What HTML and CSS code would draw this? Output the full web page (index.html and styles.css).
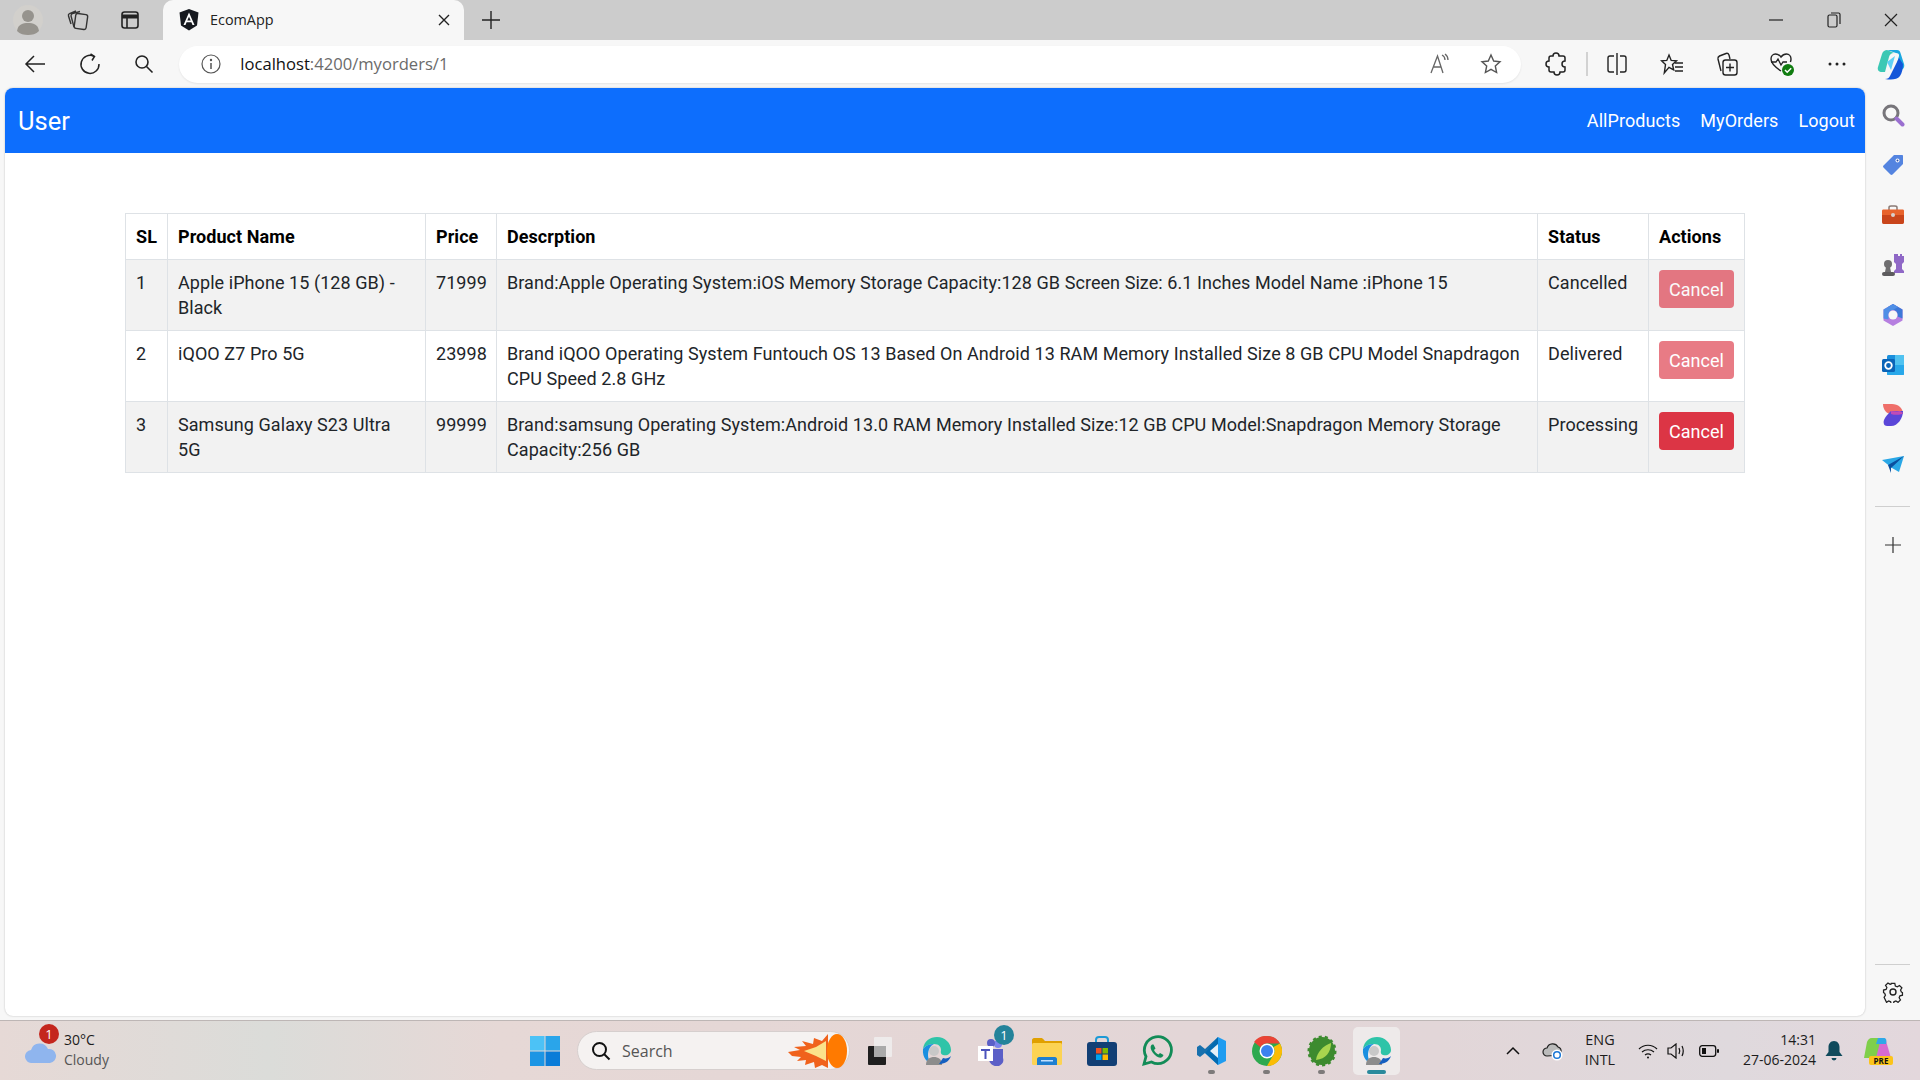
FILE: index.html
```html
<!DOCTYPE html>
<html lang="en">
<head>
    <meta charset="UTF-8">
    <title>EcomApp</title>
    <link rel="stylesheet" href="styles.css">
</head>
<body>
    <div class="tabstrip">
        <div class="strip-btn first">
            <svg width="32" height="32" viewBox="0 0 32 32"><circle cx="16" cy="16" r="15" fill="#d2d0cc"/><circle cx="16" cy="12" r="6" fill="#96938d"/><path d="M5 27c1-7 6-8 11-8s10 1 11 8c-3 3-7 4-11 4s-8-1-11-4z" fill="#96938d"/></svg>
        </div>
        <div class="strip-btn second">
            <svg width="24" height="24" viewBox="0 0 24 24" fill="none" stroke="#333" stroke-width="1.4"><rect x="9" y="6" width="12" height="15" rx="2" transform="rotate(8 15 13)"/><path d="M8 19 5 8c0-1 .5-2 1.500-2.300L14 3.500M5 16 2.500 8c-.3-1 .2-2 1-2.300L10 3"/></svg>
        </div>
        <div class="strip-btn third">
            <svg width="22" height="22" viewBox="0 0 22 22" fill="none" stroke="#222" stroke-width="1.6"><rect x="3" y="3" width="16" height="16" rx="2.500"/><path d="M3 7.500h16" stroke-width="4"/><path d="M8 8v11"/></svg>
        </div>
        <div class="tab">
            <svg class="favicon" width="20" height="22" viewBox="0 0 20 22"><path d="M10 0 19.500 3.400 18 16.500 10 21.500 2 16.500.5 3.400z" fill="#16191f"/><path d="M10 3.500 4.500 16h2l1.100-2.800h4.800l1.100 2.800h2zm0 4.300 1.700 3.700H8.300z" fill="#fff"/></svg>
            <span class="tab-title">EcomApp</span>
            <svg width="12" height="12" viewBox="0 0 12 12" stroke="#222" stroke-width="1.400"><path d="M1 1l10 10M11 1 1 11"/></svg>
        </div>
        <div class="strip-btn plus">
            <svg width="20" height="20" viewBox="0 0 20 20" stroke="#222" stroke-width="1.400"><path d="M10 1v18M1 10h18"/></svg>
        </div>
        <div class="window-btns">
            <svg width="14" height="14" viewBox="0 0 14 14" stroke="#222" stroke-width="1.200"><path d="M0 7h14"/></svg>
            <svg width="14" height="16" viewBox="0 0 14 16" fill="none" stroke="#222" stroke-width="1.200"><rect x="1" y="3" width="9" height="12" rx="1.500"/><path d="M4 1h7.500c1 0 1.500.5 1.500 1.500V12"/></svg>
            <svg width="14" height="14" viewBox="0 0 14 14" stroke="#222" stroke-width="1.200"><path d="M1 1l12 12M13 1 1 13"/></svg>
        </div>
    </div>

    <div class="toolbar">
        <div class="tool-btn">
            <svg width="22" height="20" viewBox="0 0 22 20" fill="none" stroke="#222" stroke-width="1.500"><path d="M21 10H2M10 2l-8 8 8 8"/></svg>
        </div>
        <div class="tool-btn">
            <svg width="22" height="22" viewBox="0 0 22 22" fill="none" stroke="#222" stroke-width="1.500"><path d="M15 3.300A9 9 0 1 0 20 11"/><path d="M11.500 1 15.500 3.500 13 7.500"/></svg>
        </div>
        <div class="tool-btn">
            <svg width="20" height="20" viewBox="0 0 20 20" fill="none" stroke="#222" stroke-width="1.600"><circle cx="8" cy="8" r="6"/><path d="M12.500 12.500 18.500 18.500"/></svg>
        </div>
        <div class="addressbar">
            <svg class="info" width="20" height="20" viewBox="0 0 20 20" fill="none" stroke="#555" stroke-width="1.200"><circle cx="10" cy="10" r="9"/><path d="M10 9v6" stroke-width="1.500"/><circle cx="10" cy="6" r=".6"/></svg>
            <span class="url">localhost<span class="url-rest">:4200/myorders/1</span></span>
            <svg class="read" width="24" height="22" viewBox="0 0 24 22" fill="none" stroke="#666" stroke-width="1.300"><path d="M3 20 9.500 3 15 20M5.500 14h8"/><path d="M14 2c2 1 3 3 3 5M17 1c2 1.500 3 3.500 3 6"/></svg>
            <svg class="star" width="22" height="22" viewBox="0 0 22 22" fill="none" stroke="#555" stroke-width="1.400"><path d="M11 2l2.700 6 6.300.7-4.700 4.300 1.300 6.500L11 16.300 5.400 19.500 6.700 13 2 8.700 8.300 8z"/></svg>
        </div>
        <div class="toolbar-right">
            <div class="tool-cell">
                <svg width="22" height="24" viewBox="0 0 22 24" fill="none" stroke="#222" stroke-width="1.500"><path d="M8 4a3 3 0 0 1 6 0h4c1 0 2 1 2 2v3a3 3 0 0 0 0 6v3c0 1-1 2-2 2h-3a3 3 0 0 1-6 0H6c-1 0-2-1-2-2v-3a3 3 0 0 1 0-6V6c0-1 1-2 2-2z"/></svg>
            </div>
            <span class="tool-divider"></span>
            <div class="tool-cell">
                <svg width="22" height="24" viewBox="0 0 22 24" fill="none" stroke="#222" stroke-width="1.400"><path d="M8 4H4a2 2 0 0 0-2 2v12a2 2 0 0 0 2 2h4M14 4h4a2 2 0 0 1 2 2v12a2 2 0 0 1-2 2h-4M11 1v22"/></svg>
            </div>
            <div class="tool-cell">
                <svg width="24" height="24" viewBox="0 0 24 24" fill="none" stroke="#222" stroke-width="1.400"><path d="M9 3l2.200 5.400 5.300.4-4 3.700 1.200 5.300L9 15.300 4.300 21 5.500 12.500 1.500 8.800l5.300-.4z"/><path d="M15 11h8M15 15h8M15 19h8"/></svg>
            </div>
            <div class="tool-cell">
                <svg width="24" height="26" viewBox="0 0 24 26" fill="none" stroke="#222" stroke-width="1.400"><path d="M6 20 3 8c-.3-1.500.5-2.500 1.500-3L11 2.500c1.500-.5 2.500.3 3 1.500l1 4"/><rect x="8" y="9" width="14" height="15" rx="2.500"/><path d="M15 12.500v8M11 16.500h8"/></svg>
            </div>
            <div class="tool-cell">
                <svg width="28" height="28" viewBox="0 0 28 28"><path d="M13 21C7 17 3 13 3 9c0-3 2-5 4.500-5 2 0 4 1 5.500 3 1.500-2 3.500-3 5.500-3C21 4 23 6 23 9c0 1-.2 2-.6 3" fill="none" stroke="#222" stroke-width="1.400"/><path d="M3 12h5l2-3 3 6 2-3h4" fill="none" stroke="#222" stroke-width="1.300"/><circle cx="20" cy="20" r="6" fill="#107c10"/><path d="M17 20l2.200 2.200 4-4" fill="none" stroke="#fff" stroke-width="1.500"/></svg>
            </div>
            <div class="tool-cell">
                <svg width="18" height="4" viewBox="0 0 18 4" fill="#222"><circle cx="2" cy="2" r="1.500"/><circle cx="9" cy="2" r="1.500"/><circle cx="16" cy="2" r="1.500"/></svg>
            </div>
            <div class="tool-cell">
                <svg width="30" height="32" viewBox="0 0 30 32"><path d="M10 2h10c2 0 3 1 3.500 3L27 16c1 3-1 6-4 6h-5l4-14c.5-2-1-3-3-3z" fill="#1aa7e0"/><path d="M10 2c-2 0-4 1-5 4L1 19c-1 3 1 5 4 5h3L12 9c.5-2 2-4 5-4z" fill="#3cc8b4"/><path d="M22 10l-9 18c-1 2-2 3-5 3 6 1 12 1 15-3 2-3 3-8 3-12z" fill="#1456d9"/><path d="M10 14l8-6-4 14z" fill="#5fd0f5"/></svg>
            </div>
        </div>
    </div>

    <div class="browser-body">
        <main class="page">
            <nav class="navbar">
                <span class="brand">User</span>
                <div class="nav-links">
                    <a>AllProducts</a>
                    <a>MyOrders</a>
                    <a>Logout</a>
                </div>
            </nav>
            <div class="table-wrap">
                <table class="orders">
                    <colgroup>
                        <col class="c-sl"><col class="c-name"><col class="c-price"><col class="c-desc"><col class="c-status"><col class="c-actions">
                    </colgroup>
                    <thead>
                        <tr><th>SL</th><th>Product Name</th><th>Price</th><th>Descrption</th><th>Status</th><th>Actions</th></tr>
                    </thead>
                    <tbody>
                        <tr>
                            <td>1</td>
                            <td>Apple iPhone 15 (128 GB) - Black</td>
                            <td>71999</td>
                            <td>Brand:Apple Operating System:iOS Memory Storage Capacity:128 GB Screen Size: 6.1 Inches Model Name :iPhone 15</td>
                            <td>Cancelled</td>
                            <td><button class="btn-cancel off">Cancel</button></td>
                        </tr>
                        <tr>
                            <td>2</td>
                            <td>iQOO Z7 Pro 5G</td>
                            <td>23998</td>
                            <td>Brand iQOO Operating System Funtouch OS 13 Based On Android 13 RAM Memory Installed Size 8 GB CPU Model Snapdragon CPU Speed 2.8 GHz</td>
                            <td>Delivered</td>
                            <td><button class="btn-cancel off">Cancel</button></td>
                        </tr>
                        <tr>
                            <td>3</td>
                            <td>Samsung Galaxy S23 Ultra 5G</td>
                            <td>99999</td>
                            <td>Brand:samsung Operating System:Android 13.0 RAM Memory Installed Size:12 GB CPU Model:Snapdragon Memory Storage Capacity:256 GB</td>
                            <td>Processing</td>
                            <td><button class="btn-cancel">Cancel</button></td>
                        </tr>
                    </tbody>
                </table>
            </div>
        </main>

        <aside class="sidebar">
            <div class="side-icons">
                <div class="side-cell"><svg width="24" height="24" viewBox="0 0 24 24" fill="none"><circle cx="10" cy="10" r="7" stroke="#77757a" stroke-width="3"/><path d="M15.500 15.500 21.500 21.500" stroke="#9a6fd0" stroke-width="4" stroke-linecap="round"/></svg></div>
                <div class="side-cell"><svg width="22" height="22" viewBox="0 0 22 22"><path d="M12 1h8c.6 0 1 .4 1 1v8L10.500 20.500c-.6.6-1.500.6-2 0L1.500 13.500c-.6-.6-.6-1.500 0-2z" fill="#5484e0"/><circle cx="15.500" cy="6.500" r="2" fill="#fff"/><circle cx="15.500" cy="6.500" r="1" fill="#2c4fa8"/></svg></div>
                <div class="side-cell"><svg width="24" height="20" viewBox="0 0 24 20"><path d="M8 5V2.500C8 1.500 9 1 10 1h4c1 0 2 .5 2 1.500V5" fill="none" stroke="#8a7a75" stroke-width="1.500"/><path d="M1 6c0-1 .5-1.500 1.500-1.500h19c1 0 1.500.5 1.500 1.500v4H1z" fill="#e8632c"/><path d="M1 10h22v7c0 1-.5 2-1.500 2h-19C1.500 19 1 18 1 17z" fill="#c9451b"/><circle cx="12" cy="10" r="2" fill="#d8d0cc"/></svg></div>
                <div class="side-cell"><svg width="24" height="24" viewBox="0 0 24 24"><path d="M15 1h2v2h2V1h2v2h2v6l-2 2v5l2 2v2H13v-2l2-2v-5l-2-2V1h2z" fill="#8f68c6"/><circle cx="7" cy="11" r="4" fill="#6f6e70"/><path d="M5 14h4l1 5H4z" fill="#6f6e70"/><rect x="1" y="19" width="13" height="4" rx="2" fill="#5d5c5e"/></svg></div>
                <div class="side-cell"><svg width="22" height="24" viewBox="0 0 22 24"><path d="M11 1 20.500 6.500v11L11 23 1.500 17.500v-11z" fill="#b67fe0"/><path d="M11 1 20.500 6.500v9l-5-2V12a5 5 0 0 0-4.500-5L6 4z" fill="#3d78d8"/><path d="M11 1 1.500 6.500v9l5 1V12a5 5 0 0 1 4.500-5L16 4z" fill="#4f8fe6"/><circle cx="11" cy="12" r="4.500" fill="#f7f7f7"/></svg></div>
                <div class="side-cell"><svg width="24" height="22" viewBox="0 0 24 22"><rect x="6" y="1" width="17" height="20" rx="1.500" fill="#1a8fdc"/><path d="M6 11h17v8.500c0 1-.5 1.500-1.500 1.500h-14c-1 0-1.500-.5-1.500-1.500z" fill="#28a8ea"/><path d="M14 1h9v10h-9z" fill="#50c2f0"/><rect x="1" y="5" width="13" height="13" rx="1.500" fill="#0a64b8"/><circle cx="7.500" cy="11.500" r="3.300" fill="none" stroke="#fff" stroke-width="1.800"/></svg></div>
                <div class="side-cell"><svg width="22" height="24" viewBox="0 0 22 24"><path d="M1 1h9c6 0 11 4 11 10H9C5 11 1 7 1 1z" fill="#ef6f6a"/><path d="M9 8h12c0 7-5 15-12 15H5c-3 0-4-3-3-6s4-6 7-9z" fill="#5a46d8"/><path d="M9 8c3 0 6 1 9 0l3 2c0 1-6 3-12 1z" fill="#c04bb8"/></svg></div>
                <div class="side-cell"><svg width="24" height="18" viewBox="0 0 24 18"><path d="M1 4 23 0 18 16 11 12z" fill="#29a7e6"/><path d="M7 9 23 0 10 12 10 17z" fill="#0a4f9e"/></svg></div>
                <span class="side-line"></span>
                <div class="side-cell"><svg width="16" height="16" viewBox="0 0 16 16" stroke="#333" stroke-width="1.200"><path d="M8 0v16M0 8h16"/></svg></div>
            </div>
            <div class="side-bottom">
                <span class="side-line"></span>
                <svg width="22" height="22" viewBox="0 0 22 22" fill="none" stroke="#222" stroke-width="1.400"><circle cx="11" cy="11" r="3"/><path d="M9 1.500h4l.6 2.800 2.200.9 2.400-1.500 2.700 2.700-1.500 2.400.9 2.200 1.200.6v3l-2.800.6-.9 2.200 1.500 2.400-2.700 2.700-2.400-1.500-2.200.9-.6 2.800H9l-.6-2.800-2.200-.9-2.400 1.500L1.100 17l1.500-2.400-.9-2.200L.5 11.800v-3l2.800-.6.9-2.200L2.700 3.600 5.400 1l2.400 1.500 1-.2z" transform="translate(1.100 1.100) scale(.9)"/></svg>
            </div>
        </aside>
    </div>

    <footer class="taskbar">
        <div class="weather">
            <svg class="cloud" width="32" height="20" viewBox="0 0 32 20"><path d="M7 20a6.500 6.500 0 0 1-1-13 9 9 0 0 1 17-1 7 7 0 0 1 2 14z" fill="#8fb5ee"/></svg>
            <span class="weather-badge">1</span>
            <div class="weather-text">
                <span>30°C</span>
                <span class="cloudy">Cloudy</span>
            </div>
        </div>
        <svg class="start" width="30" height="30" viewBox="0 0 30 30"><rect width="14.500" height="14.500" fill="#4cc2f6"/><rect x="15.500" width="14.500" height="14.500" fill="#2aa5ea"/><rect y="15.500" width="14.500" height="14.500" fill="#1c95e4"/><rect x="15.500" y="15.500" width="14.500" height="14.500" fill="#0a7cd8"/></svg>
        <div class="search">
            <svg width="20" height="20" viewBox="0 0 20 20" fill="none" stroke="#111" stroke-width="2"><circle cx="8.500" cy="8.500" r="6.500"/><path d="M13 13l5.500 5.500"/></svg>
            <span>Search</span>
            <svg class="search-art" width="60" height="36" viewBox="0 0 60 36"><path d="M0 19l12-2-6-3 12-1-4-5 11 3 1-6 8 3 6-7v34l-6-3-7 3-1-6-9 3 1-5-9 1 4-4-9-1z" fill="#f0621c"/><path d="M16 18l12-4 10-6v20l-10-5z" fill="#fbe28a"/><ellipse cx="49" cy="18" rx="10" ry="17" fill="#ff7a00"/></svg>
        </div>
        <div class="apps">
            <div class="app">
                <svg width="30" height="30" viewBox="0 0 30 30"><rect x="1" y="10" width="18" height="19" rx="1" fill="#1f1f1f"/><rect x="7" y="1" width="18" height="20" rx="1" fill="#efeded" fill-opacity=".92"/><rect x="7" y="10" width="12" height="11" fill="#aaa"/></svg>
            </div>
            <div class="app">
                <svg width="32" height="30" viewBox="0 0 32 30"><path d="M2 13C3 5 9 1 16 1c8 0 14 6 14 13 0 4-4 6-8 5-3-1-2-4-2-5 0-3-2-6-7-6-5 0-9 2-11 5z" fill="#2ec4a8"/><path d="M2 13c3-4 7-5 11-5-4 2-6 6-6 11 0 4 2 8 7 10C7 28 1 22 2 13z" fill="#1a8fe0"/><circle cx="13" cy="15" r="5" fill="#c8c8c8"/><path d="M5 29c0-6 4-8 8-8s8 2 8 8z" fill="#8c8c8c"/><path d="M18 28c5 0 10-2 12-8-2 2-5 3-8 2z" fill="#155fc0"/></svg>
            </div>
            <div class="app">
                <svg width="30" height="30" viewBox="0 0 30 30"><circle cx="21" cy="8" r="4" fill="#7b83eb"/><path d="M12 13h14v9a6 6 0 0 1-6 8 7 7 0 0 1-8-7z" fill="#5b5fc7"/><circle cx="14" cy="7" r="4" fill="#5b5fc7"/><rect x="1" y="10" width="15" height="15" fill="#fff"/><path d="M4 13h9v2H9.500v8h-2v-8H4z" fill="#4b53bc"/></svg>
                <span class="app-badge">1</span>
            </div>
            <div class="app">
                <svg width="30" height="28" viewBox="0 0 30 28"><path d="M0 3c0-1 1-2 2-2h7c1 0 2 .5 3 2l1 1h17v5H0z" fill="#e0a000"/><rect y="6" width="30" height="22" rx="1.500" fill="#fcd353"/><path d="M5 28v-6c0-1 1-2 2-2h16c1 0 2 1 2 2v6z" fill="#1e7fd0"/><rect x="9" y="23" width="12" height="1.500" fill="#bfe0ff"/></svg>
            </div>
            <div class="app">
                <svg width="30" height="30" viewBox="0 0 30 30"><path d="M9 7V4c0-2 1-3 3-3h6c2 0 3 1 3 3v3" fill="none" stroke="#1d9ad6" stroke-width="2"/><rect y="6" width="30" height="24" rx="3" fill="#123f75"/><rect x="9" y="12" width="5.500" height="5.500" fill="#f25022"/><rect x="15.500" y="12" width="5.500" height="5.500" fill="#7fba00"/><rect x="9" y="18.500" width="5.500" height="5.500" fill="#00a4ef"/><rect x="15.500" y="18.500" width="5.500" height="5.500" fill="#ffb900"/></svg>
            </div>
            <div class="app">
                <svg width="32" height="32" viewBox="0 0 32 32" fill="none"><path d="M3 29l2-7.500A13.500 13.500 0 1 1 10.500 27z" stroke="#128c57" stroke-width="2.800"/><path d="M11 9.500c-1.500 1-2 3-.5 6s4.500 6 7.500 7c2 .6 4-.5 4.500-2.500l-3.500-2-1.500 1.500c-2-1-3.500-2.500-4.500-4.500l1.500-1.500-2-4z" fill="#128c57"/></svg>
            </div>
            <div class="app running">
                <svg width="30" height="30" viewBox="0 0 30 30"><path d="M21 1l8 4v20l-8 4-13-12z" fill="#1f9cf0"/><path d="M21 1 8 13l-5-4-3 2v8l3 2 5-4 13 12z" fill="#0065a9" fill-opacity=".9"/><path d="M21 8v14l-8-7z" fill="#fff" fill-opacity=".9"/></svg>
            </div>
            <div class="app running">
                <svg width="30" height="30" viewBox="0 0 30 30"><circle cx="15" cy="15" r="15" fill="#2da94f"/><path d="M15 0a15 15 0 0 1 13 7.500H15a7.500 7.500 0 0 0-6.500 3.800L2 6A15 15 0 0 1 15 0z" fill="#ea4335"/><path d="M28 7.500A15 15 0 0 1 15 30l6.500-11.300A7.500 7.500 0 0 0 21.500 11z" fill="#fbbc04"/><circle cx="15" cy="15" r="7.500" fill="#fff"/><circle cx="15" cy="15" r="6" fill="#3b82f0"/></svg>
            </div>
            <div class="app running">
                <svg width="30" height="32" viewBox="0 0 30 32"><ellipse cx="15" cy="16" rx="13" ry="14" fill="#3d8b2f" stroke="#3d8b2f" stroke-width="3" stroke-dasharray="3 3"/><path d="M24 8c0 9-5 16-15 17 1-8 7-14 15-17z" fill="#a8d64e"/></svg>
            </div>
            <div class="app active">
                <svg width="32" height="30" viewBox="0 0 32 30"><path d="M2 13C3 5 9 1 16 1c8 0 14 6 14 13 0 4-4 6-8 5-3-1-2-4-2-5 0-3-2-6-7-6-5 0-9 2-11 5z" fill="#2ec4a8"/><path d="M2 13c3-4 7-5 11-5-4 2-6 6-6 11 0 4 2 8 7 10C7 28 1 22 2 13z" fill="#1a8fe0"/><circle cx="13" cy="15" r="5" fill="#c8c8c8"/><path d="M5 29c0-6 4-8 8-8s8 2 8 8z" fill="#8c8c8c"/><path d="M18 28c5 0 10-2 12-8-2 2-5 3-8 2z" fill="#155fc0"/></svg>
            </div>
        </div>
        <div class="tray">
            <svg class="tray-chevron" width="14" height="9" viewBox="0 0 14 9" fill="none" stroke="#111" stroke-width="1.500"><path d="M1 8l6-6 6 6"/></svg>
            <svg class="tray-cloud" width="22" height="20" viewBox="0 0 22 20"><path d="M5 15a4 4 0 0 1 0-8 6 6 0 0 1 11-1 4.500 4.500 0 0 1 3 5v3z" fill="#bbb" stroke="#222" stroke-width="1.200"/><circle cx="15" cy="14" r="5.500" fill="#fff"/><circle cx="15" cy="14" r="3.300" fill="none" stroke="#1c78d6" stroke-width="1.500"/></svg>
            <div class="lang"><span>ENG</span><span>INTL</span></div>
            <svg class="tray-wifi" width="20" height="16" viewBox="0 0 20 16" fill="none" stroke="#111" stroke-width="1.200"><path d="M1 6c5-5 13-5 18 0M4 9c3.500-3 8.500-3 12 0M7 12c2-1.500 4-1.500 6 0"/><circle cx="10" cy="14.500" r="1" fill="#111" stroke="none"/></svg>
            <svg class="tray-vol" width="20" height="16" viewBox="0 0 20 16" fill="none" stroke="#111" stroke-width="1.200"><path d="M1 5h3l5-4v14l-5-4H1z"/><path d="M12 5c1 2 1 4 0 6M15 3c1.500 3 1.500 7 0 10"/></svg>
            <svg class="tray-batt" width="20" height="12" viewBox="0 0 20 12"><rect x=".7" y=".7" width="16" height="10.600" rx="2.500" fill="none" stroke="#111" stroke-width="1.300"/><rect x="3" y="3" width="4" height="6" fill="#111"/><rect x="18" y="4" width="2" height="4" rx="1" fill="#111"/></svg>
            <div class="clock"><span>14:31</span><span>27-06-2024</span></div>
            <svg class="tray-bell" width="18" height="20" viewBox="0 0 18 20" fill="#0f4a5c"><path d="M9 0c3.500 0 5.500 3 5.500 6v5l3 4H.5l3-4V6C3.500 3 5.500 0 9 0z"/><path d="M6.500 17h5a2.500 2.500 0 0 1-5 0z"/></svg>
            <div class="tray-copilot">
                <svg width="30" height="22" viewBox="0 0 28 22"><path d="M8 1h10c2 0 3 1 4 3l5 17H4z" fill="#d66bd0"/><path d="M8 1C5 1 4 3 3 5L0 21h12l4-16c.5-2 1-3 3-4z" fill="#7fcf4a"/><path d="M14 1h6c2 0 3 2 2 6H12z" fill="#2fa8e8"/></svg>
                <span class="pre">PRE</span>
            </div>
        </div>
    </footer>
</body>
</html>
```

FILE: styles.css
```css
* {
    box-sizing: border-box;
}
body {
    margin: 0;
    width: 1920px;
    height: 1080px;
    overflow: hidden;
    display: flex;
    flex-direction: column;
    background-color: #f7f7f7;
    font-family: Roboto, sans-serif;
    color: #212529;
}

/* browser chrome */
.tabstrip {
    height: 40px;
    background-color: #cccccc;
    display: flex;
    align-items: center;
}
.strip-btn {
    width: 52px;
    display: flex;
    justify-content: center;
}
.strip-btn.first {
    width: 56px;
}
.strip-btn.second {
    width: 44px;
}
.strip-btn.third {
    width: 60px;
}
.strip-btn.plus {
    margin-left: 1px;
}
.tab {
    width: 301px;
    height: 40px;
    margin-left: 3px;
    padding: 0 14px 0 16px;
    background-color: #f7f7f7;
    border-radius: 10px 10px 0 0;
    display: flex;
    align-items: center;
}
.tab-title {
    flex: 1;
    margin: -2px 0 0 11px;
    font-family: "Open Sans", sans-serif;
    font-size: 14.4px;
    color: #222;
}
.window-btns {
    margin-left: auto;
    width: 151px;
    padding-right: 22px;
    display: flex;
    justify-content: space-between;
    align-items: center;
}
.toolbar {
    height: 48px;
    background-color: #f7f7f7;
    display: flex;
    align-items: center;
    padding-left: 8px;
}
.tool-btn {
    width: 55px;
    display: flex;
    justify-content: center;
}
.addressbar {
    width: 1355px;
    height: 37px;
    margin-left: 8px;
    padding: 0 19px 0 22px;
    background-color: #fff;
    border-radius: 19px;
    box-shadow: 0 1px 2px rgba(0,0,0,0.08);
    display: flex;
    align-items: center;
}
.url {
    flex: 1;
    margin: -2px 0 0 19px;
    font-family: "Open Sans", sans-serif;
    font-size: 16.6px;
    color: #111;
}
.url-rest {
    color: #6b6b6b;
}
.read {
    margin-right: 28px;
}
.toolbar-right {
    flex: 1;
    display: flex;
    align-items: center;
    padding-left: 8px;
}
.tool-cell {
    width: 55px;
    display: flex;
    justify-content: center;
}
.tool-divider {
    width: 2px;
    height: 24px;
    margin: 0 2px;
    background-color: #d2d2d2;
}

/* page */
.browser-body {
    height: 932px;
    display: flex;
    padding-left: 5px;
}
.page {
    width: 1860px;
    height: 928px;
    background-color: #fff;
    border-radius: 8px;
    box-shadow: 0 0 2px rgba(0,0,0,0.25);
    overflow: hidden;
}
.navbar {
    height: 65px;
    padding: 0 10px 0 13px;
    background-color: #0d6efd;
    color: #fff;
    display: flex;
    align-items: center;
    justify-content: space-between;
}
.brand {
    font-size: 25.5px;
}
.nav-links {
    display: flex;
    gap: 20px;
    font-size: 18px;
    letter-spacing: 0.065px;
}
.table-wrap {
    padding: 60px 120px 0;
}
.orders {
    width: 1619px;
    table-layout: fixed;
    border-collapse: collapse;
    font-size: 18px;
    line-height: 25px;
    letter-spacing: 0.065px;
    color: #212529;
}
.c-sl { width: 42px; }
.c-name { width: 258px; }
.c-price { width: 71px; }
.c-desc { width: 1041px; }
.c-status { width: 111px; }
.c-actions { width: 96px; }
.orders th, .orders td {
    border: 1px solid #dee2e6;
    padding: 10px;
    text-align: left;
    vertical-align: top;
}
.orders th {
    font-weight: 700;
    color: #000;
}
.orders tbody tr:nth-child(odd) td {
    background-color: #f2f2f2;
}
.btn-cancel {
    width: 75px;
    height: 38px;
    padding: 0;
    border: 0;
    border-radius: 4px;
    background-color: #dc3545;
    color: #fff;
    font-family: Roboto, sans-serif;
    font-size: 18px;
    display: block;
}
.btn-cancel.off {
    opacity: 0.65;
}

/* edge sidebar */
.sidebar {
    width: 55px;
    height: 928px;
    display: flex;
    flex-direction: column;
    justify-content: space-between;
    align-items: center;
}
.side-icons {
    padding-top: 2px;
    display: flex;
    flex-direction: column;
    align-items: center;
}
.side-cell {
    height: 50px;
    display: flex;
    align-items: center;
}
.side-line {
    display: block;
    width: 35px;
    height: 1px;
    background-color: #cfcfcf;
}
.side-icons .side-line {
    margin: 16px 0 13px;
}
.side-bottom {
    display: flex;
    flex-direction: column;
    align-items: center;
    gap: 16px;
    padding-bottom: 13px;
}

/* windows taskbar */
.taskbar {
    height: 60px;
    border-top: 1px solid #bdb6b5;
    background: linear-gradient(90deg, #e6d9d6 0%, #dbdcd9 14%, #e6d8d6 26%, #e4d6d6 50%, #e2d6d8 75%, #dfd9dd 90%, #e3d7dc 100%);
    display: flex;
    align-items: center;
    font-family: "Open Sans", sans-serif;
    font-size: 14px;
    color: #1c1c1c;
}
.weather {
    width: 530px;
    padding-left: 25px;
    display: flex;
    align-items: center;
    position: relative;
}
.cloud {
    margin-top: 4px;
}
.weather-badge {
    position: absolute;
    left: 39px;
    top: -8px;
    width: 20px;
    height: 20px;
    border-radius: 50%;
    background-color: #c4261d;
    color: #fff;
    font-size: 13px;
    line-height: 20px;
    text-align: center;
}
.weather-text {
    margin: -2px 0 0 7px;
    display: flex;
    flex-direction: column;
    line-height: 20px;
}
.cloudy {
    color: #555;
}
.start {
    flex: none;
}
.search {
    width: 273px;
    height: 39px;
    margin-left: 17px;
    padding-left: 13px;
    border-radius: 20px;
    background-color: #f5f2f1;
    border: 1px solid #d6cfce;
    display: flex;
    align-items: center;
    position: relative;
    font-size: 16px;
    color: #555;
}
.search span {
    margin-left: 11px;
}
.search-art {
    position: absolute;
    right: 1px;
    top: 1px;
}
.apps {
    margin-left: 4px;
    display: flex;
    align-items: center;
}
.app {
    width: 55px;
    height: 48px;
    display: flex;
    align-items: center;
    justify-content: center;
    position: relative;
}
.app.running::after, .app.active::after {
    content: "";
    position: absolute;
    left: 50%;
    bottom: 1px;
    width: 7px;
    height: 4px;
    margin-left: -3.5px;
    border-radius: 2px;
    background-color: #7d7a7a;
}
.app.active {
    width: 47px;
    margin-left: 4px;
    background-color: #eeeaea;
    border-radius: 5px;
}
.app.active::after {
    width: 19px;
    margin-left: -9.5px;
    background-color: #2a8a9c;
}
.app-badge {
    position: absolute;
    left: 30px;
    top: -2px;
    width: 20px;
    height: 20px;
    border-radius: 50%;
    background-color: #24839a;
    color: #fff;
    font-size: 13px;
    line-height: 20px;
    text-align: center;
}
.tray {
    flex: 1;
    display: flex;
    align-items: center;
    height: 100%;
}
.tray-chevron { margin-left: 106px; }
.tray-cloud { margin-left: 22px; }
.lang {
    width: 40px;
    margin: -2px 0 0 16px;
    display: flex;
    flex-direction: column;
    align-items: center;
    font-size: 14.4px;
    line-height: 20px;
}
.tray-wifi { margin-left: 18px; }
.tray-vol { margin-left: 9px; }
.tray-batt { margin-left: 12px; }
.clock {
    width: 90px;
    margin: -2px 0 0 7px;
    display: flex;
    flex-direction: column;
    align-items: flex-end;
    line-height: 20px;
}
.tray-bell { margin-left: 9px; }
.tray-copilot {
    margin-left: 20px;
    position: relative;
    height: 28px;
}
.tray-copilot svg {
    display: block;
}
.pre {
    position: absolute;
    left: 6px;
    top: 19px;
    width: 24px;
    height: 9px;
    border-radius: 2px;
    background-color: #fcc419;
    color: #111;
    font-size: 8px;
    font-weight: 700;
    line-height: 9px;
    text-align: center;
}
```
